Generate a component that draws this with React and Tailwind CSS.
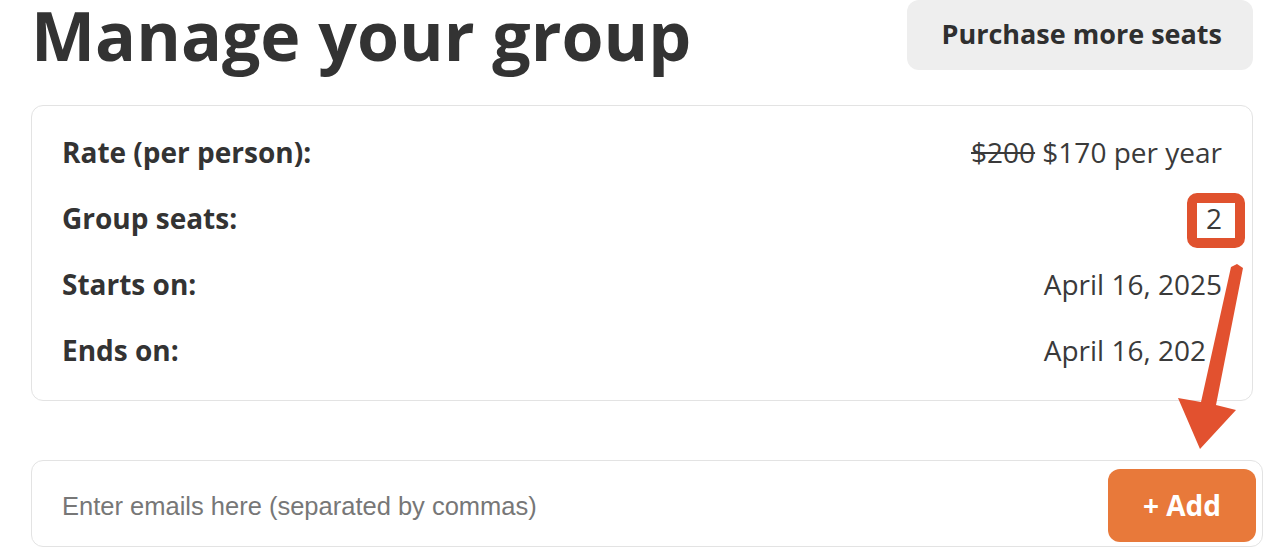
import React from "react";

const sans = { fontFamily: '"Open Sans", "Noto Sans", sans-serif' };

function Row({ label, children }) {
  return (
    <div className="flex h-[66px] items-center justify-between">
      <span className="text-[28px] font-bold text-[#333333]">{label}</span>
      <span className="text-[28px] text-[#3a3a3a]">{children}</span>
    </div>
  );
}

export default function App() {
  return (
    <div
      className="relative h-[555px] w-[1280px] overflow-hidden bg-white"
      style={sans}
    >
      <div className="pl-[31px]">
        <div className="flex h-[70px] w-[1222px] items-start justify-between">
          <h1 className="text-[68px] font-bold leading-[70px] text-[#333333]">
            Manage your group
          </h1>
          <button className="flex h-[70px] items-center rounded-[12px] bg-[#eeeeee] pb-[2px] pl-[34px] pr-[31px] text-[27px] font-bold text-[#2f2f2f]">
            Purchase more seats
          </button>
        </div>

        <div className="relative mt-[35px] h-[296px] w-[1222px] rounded-[12px] border border-[#e3e3e3] px-[30px] pb-[17px] pt-[13px]">
          <Row label="Rate (per person):">
            <span className="line-through">$200</span> $170 per year
          </Row>
          <Row label="Group seats:">2</Row>
          <Row label="Starts on:">April 16, 2025</Row>
          <Row label="Ends on:">
            April 16, 202<span className="opacity-0">6</span>
          </Row>
          <div className="absolute left-[1155px] top-[87px] h-[55px] w-[58px] rounded-[10px] border-[10px] border-[#e0522e]" />
        </div>

        <div className="mt-[59px] flex h-[87px] w-[1232px] items-start justify-between rounded-[12px] border border-[#e3e3e3] pl-[30px] pr-[6px] pt-[8px]">
          <span
            className="mt-[18px] text-[25.5px] text-[#777777]"
            style={{ fontFamily: '"Liberation Sans", Arial, sans-serif' }}
          >
            Enter emails here (separated by commas)
          </span>
          <button className="flex h-[73px] w-[148px] items-center justify-center rounded-[12px] bg-[#e8793a] pb-[2px] text-[28px] font-bold text-white">
            + Add
          </button>
        </div>
      </div>

      <svg
        className="pointer-events-none absolute left-0 top-0"
        width="1280"
        height="555"
        viewBox="0 0 1280 555"
      >
        <polygon
          points="1231,267 1237,264 1243,268 1216,405 1236,410 1200,449 1178,398 1201,402"
          fill="#e2512f"
          strokeLinejoin="round"
        />
      </svg>
    </div>
  );
}
